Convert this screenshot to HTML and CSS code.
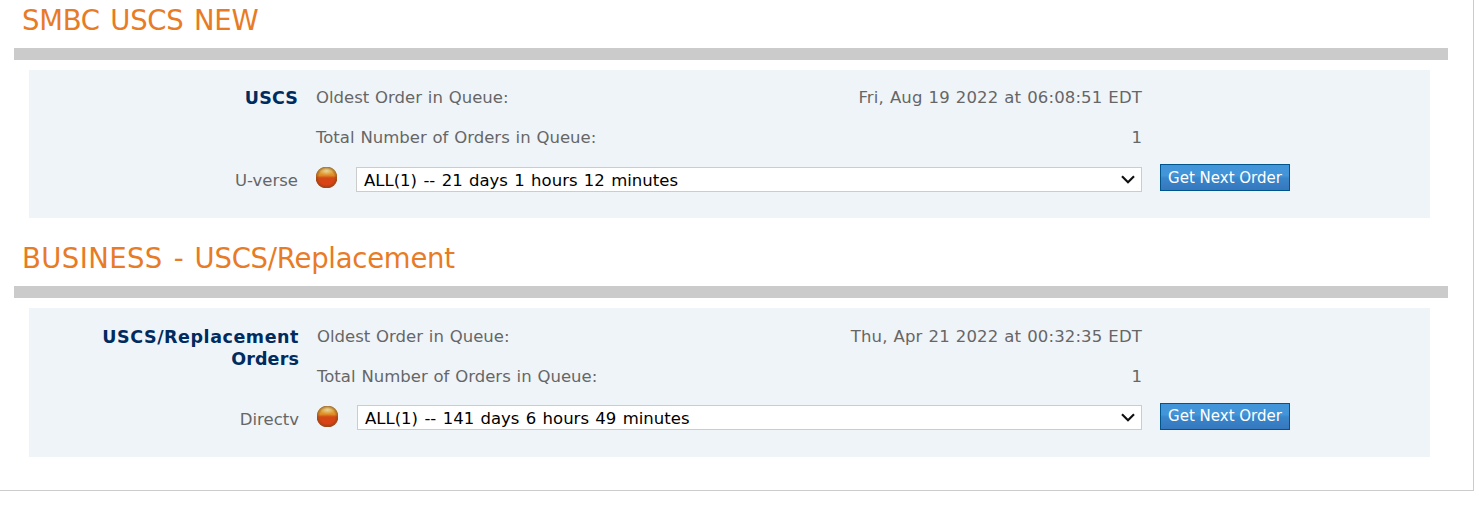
FILE: index.html
```html
<!DOCTYPE html>
<html lang="en">
<head>
<meta charset="utf-8">
<title>Order Queues</title>
<link rel="stylesheet" href="styles.css">
</head>
<body>
<svg class="defs" width="0" height="0" aria-hidden="true">
  <defs>
    <linearGradient id="ball" x1="0" y1="0" x2="0" y2="1">
      <stop offset="0" stop-color="#b98a4a"/>
      <stop offset=".2" stop-color="#e0a83c"/>
      <stop offset=".4" stop-color="#e08a28"/>
      <stop offset=".52" stop-color="#d04a14"/>
      <stop offset=".8" stop-color="#de4016"/>
      <stop offset="1" stop-color="#b5431c"/>
    </linearGradient>
    <radialGradient id="rim">
      <stop offset=".7" stop-color="#7a3a10" stop-opacity="0"/>
      <stop offset="1" stop-color="#80501c" stop-opacity=".65"/>
    </radialGradient>
    <radialGradient id="shine">
      <stop offset="0" stop-color="#e6d8ac" stop-opacity=".95"/>
      <stop offset="1" stop-color="#e8c060" stop-opacity="0"/>
    </radialGradient>
    <symbol id="status" viewBox="0 0 21 21">
      <circle cx="10.5" cy="10.5" r="10.8" fill="url(#ball)"/>
      <circle cx="10.5" cy="10.5" r="10.8" fill="url(#rim)"/>
      <ellipse cx="10.5" cy="4" rx="7.5" ry="4.5" fill="url(#shine)"/>
    </symbol>
    <symbol id="chevron" viewBox="0 0 14 9">
      <path d="M1 1.2 7 7.2l6-6" fill="none" stroke="#101010" stroke-width="2.2"/>
    </symbol>
  </defs>
</svg>
<main class="page">
  <section class="queue">
    <h2 class="title">SMBC USCS NEW</h2>
    <div class="panel">
      <h3 class="name">USCS</h3>
      <div class="row"><span>Oldest Order in Queue:</span><span class="date">Fri, Aug 19 2022 at 06:08:51 EDT</span></div>
      <div class="row"><span>Total Number of Orders in Queue:</span><span>1</span></div>
      <span class="product">U-verse</span>
      <div class="picker">
        <svg class="status"><use href="#status"/></svg>
        <div class="select"><span class="choice">ALL(1) -- 21 days 1 hours 12 minutes</span><svg class="chevron"><use href="#chevron"/></svg></div>
      </div>
      <button class="next" type="button">Get Next Order</button>
    </div>
  </section>
  <section class="queue">
    <h2 class="title"><span class="division">BUSINESS -</span> USCS/Replacement</h2>
    <div class="panel panel-wide">
      <h3 class="name"><span class="name-long">USCS/Replacement</span> Orders</h3>
      <div class="row"><span>Oldest Order in Queue:</span><span class="date">Thu, Apr 21 2022 at 00:32:35 EDT</span></div>
      <div class="row"><span>Total Number of Orders in Queue:</span><span>1</span></div>
      <span class="product">Directv</span>
      <div class="picker">
        <svg class="status"><use href="#status"/></svg>
        <div class="select"><span class="choice">ALL(1) -- 141 days 6 hours 49 minutes</span><svg class="chevron"><use href="#chevron"/></svg></div>
      </div>
      <button class="next" type="button">Get Next Order</button>
    </div>
  </section>
</main>
</body>
</html>
```
FILE: styles.css
```css
* { box-sizing: border-box; }
body {
  margin: 0;
  background: #fff;
  color: #666;
  font: 16.5px/22px Verdana, "DejaVu Sans", sans-serif;
  word-spacing: .6px;
}
.defs { position: absolute; }
.page {
  width: 1474px;
  height: 491px;
  padding: 0 25px 0 14px;
  border: solid #ccc;
  border-width: 0 1px 1px 0;
  display: flex;
  flex-direction: column;
  gap: 20px;
}
.title {
  margin: 0;
  height: 60px;
  padding-left: 8px;
  border-bottom: 12px solid #cbcbcb;
  color: #e87b26;
  font-size: 27.5px;
  font-weight: 400;
  line-height: 40px;
  letter-spacing: -.25px;
  word-spacing: 2px;
  white-space: nowrap;
}
.division { letter-spacing: .4px; }
.panel {
  margin: 10px 18px 0 15px;
  height: 148px;
  padding-top: 7px;
  background: #eff4f9;
  display: grid;
  grid-template-columns: 269px 826px 130px;
  grid-template-rows: 40px 40px 40px;
  column-gap: 18px;
  white-space: nowrap;
}
.panel-wide {
  height: 149px;
  padding-top: 8px;
  grid-template-columns: 270px 825px 130px;
}
.name {
  grid-row: 1 / 3;
  margin: 10px 0 0 60px;
  color: #002b5f;
  font-size: 17.5px;
  font-weight: 700;
  line-height: 22px;
  letter-spacing: .15px;
  text-align: right;
  white-space: normal;
}
.name-long { letter-spacing: .55px; }
.row {
  grid-column: 2;
  padding-top: 2px;
  display: flex;
  justify-content: space-between;
  align-items: center;
}
.date { letter-spacing: .14px; }
.product {
  grid-column: 1;
  padding-top: 13px;
  text-align: right;
}
.picker {
  display: flex;
  align-items: flex-start;
  padding-top: 10px;
}
.status { width: 21px; height: 21px; margin-right: 19px; flex: none; }
.select {
  flex: 1;
  height: 25px;
  padding: 2px 6px 0 7px;
  border: 1px solid #ccc;
  background: #fff;
  color: #000;
  display: flex;
  justify-content: space-between;
  align-items: center;
}
.panel-wide .select { margin-top: -1px; }
.choice { word-spacing: 1.1px; }
.chevron { width: 14px; height: 9px; margin-bottom: 2px; }
.next {
  width: 130px;
  height: 27px;
  margin: 7px 0 0;
  padding: 2px 0 0;
  border: 1px solid #00568c;
  background: linear-gradient(#4295d8 0 42%, #3a86cb 52%, #3577bd);
  color: #fff;
  font: 15px/23px Verdana, "DejaVu Sans", sans-serif;
}
.panel-wide .next { padding-top: 0; }
```
